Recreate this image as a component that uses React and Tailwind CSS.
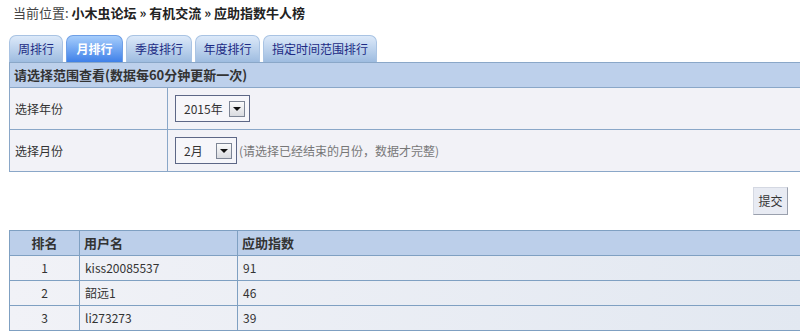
import React from 'react';

const tabs = ['周排行', '月排行', '季度排行', '年度排行', '指定时间范围排行'];
const tabWidths = ['w-[54px]', 'w-[57px]', 'w-[66px]', 'w-[65px]', 'w-[114px]'];

const rows = [
  { rank: 1, name: 'kiss20085537', score: 91 },
  { rank: 2, name: '韶远1', score: 46 },
  { rank: 3, name: 'li273273', score: 39 },
];

const font = { fontFamily: 'Tahoma, "Noto Sans CJK SC", sans-serif' };

const SelectBox = ({ value, className }) => {
  return (
    <div
      className={`flex items-center h-[27px] border border-[#5d6786] bg-[#f6f6fa] pl-[8px] pr-[4px] ${className}`}
    >
      <span className="flex-1 text-[12px] text-[#333]">{value}</span>
      <span className="flex items-center justify-center w-[16px] h-[16px] border border-[#7d8595] bg-linear-to-b from-[#fbfbfb] to-[#d9dbe0]">
        <span className="block w-0 h-0 border-l-[4px] border-r-[4px] border-t-[4px] border-l-transparent border-r-transparent border-t-[#111] mt-[1px]" />
      </span>
    </div>
  );
};

const App = () => {
  return (
    <div className="w-[800px] h-[331px] overflow-hidden bg-white text-[#333]" style={font}>
      <div className="pl-[13px] pt-[5px] h-[35px] text-[13px] leading-[16px]">
        <span className="text-[#444]">当前位置: </span>
        <span className="font-bold text-[#222]">小木虫论坛 » 有机交流 » 应助指数牛人榜</span>
      </div>

      <div className="pl-[9px]">
        <div className="flex gap-[3px] h-[27px] items-end">
          {tabs.map((tab, i) => {
            const active = i === 1;
            return (
              <div
                key={tab}
                className={`${tabWidths[i]} h-[27px] rounded-t-[7px] border border-b-0 flex items-center justify-center text-[12px] ${
                  active
                    ? 'border-[#6e9fe6] bg-linear-to-b from-[#a6cdfb] to-[#3f80e8] text-white font-bold'
                    : 'border-[#a9c3e3] bg-linear-to-b from-[#dce9f9] to-[#9ebce0] text-[#1d2b84]'
                }`}
              >
                {tab}
              </div>
            );
          })}
        </div>

        <div className="w-[800px] border-l border-[#8aa7c8] bg-[#f2f2f7]">
          <div className="h-[26px] border-t border-b border-[#8aa7c8] bg-[#bdd0eb] flex items-center pl-[4px] text-[13px] font-bold text-[#333]">
            请选择范围查看(数据每60分钟更新一次)
          </div>
          <div className="flex h-[42px] border-b border-[#8aa7c8]">
            <div className="w-[158px] border-r border-[#8aa7c8] flex items-center pl-[5px] text-[12px]">
              选择年份
            </div>
            <div className="flex items-center pl-[7px]">
              <SelectBox value="2015年" className="w-[75px]" />
            </div>
          </div>
          <div className="flex h-[42px] border-b border-[#8aa7c8]">
            <div className="w-[158px] border-r border-[#8aa7c8] flex items-center pl-[5px] text-[12px]">
              选择月份
            </div>
            <div className="flex items-center pl-[7px]">
              <SelectBox value="2月" className="w-[62px]" />
              <span className="ml-[2px] text-[12px] text-[#777]">(请选择已经结束的月份，数据才完整)</span>
            </div>
          </div>
        </div>
      </div>

      <div className="flex justify-end pr-[12px] pt-[15px] h-[58px]">
        <button className="w-[35px] h-[28px] border border-[#d4d8e2] border-r-[#9aa0ad] border-b-[#9aa0ad] bg-[#e8ebf3] text-[12px] text-[#333]">
          提交
        </button>
      </div>

      <div className="pl-[9px]">
        <div className="w-[800px] border-l border-t border-[#7fa0c2] text-[12px]">
          <div className="flex h-[25px] bg-[#bccfea] border-b border-[#7fa0c2] font-bold text-[13px] text-[#333]">
            <div className="w-[70px] border-r border-[#7fa0c2] flex items-center justify-center">排名</div>
            <div className="w-[158px] border-r border-[#7fa0c2] flex items-center pl-[4px]">用户名</div>
            <div className="flex-1 flex items-center pl-[4px]">应助指数</div>
          </div>
          {rows.map((r) => (
            <div
              key={r.rank}
              className="flex h-[25px] border-b border-[#7fa0c2] bg-linear-to-r from-[#f1f2f7] to-[#e2e8f1]"
            >
              <div className="w-[70px] border-r border-[#7fa0c2] flex items-center justify-center">{r.rank}</div>
              <div className="w-[158px] border-r border-[#7fa0c2] flex items-center pl-[5px]">{r.name}</div>
              <div className="flex-1 flex items-center pl-[5px]">{r.score}</div>
            </div>
          ))}
        </div>
      </div>
    </div>
  );
};

export default App;
